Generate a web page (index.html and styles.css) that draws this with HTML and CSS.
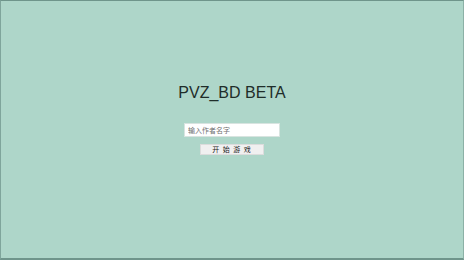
FILE: index.html
```html
<!DOCTYPE html>
<html lang="zh">
<head>
<meta charset="utf-8">
<title>PVZ_BD BETA</title>
<link rel="stylesheet" href="styles.css">
</head>
<body>
<div class="frame">
  <h1 class="title">PVZ_BD BETA</h1>
  <input class="name" type="text" placeholder="输入作者名字">
  <button class="start" type="button">开 始 游 戏</button>
</div>
</body>
</html>
```

FILE: styles.css
```css
html, body {
  margin: 0;
  padding: 0;
}
body {
  width: 464px;
  height: 260px;
  overflow: hidden;
  background: #aed6c9;
}
.frame {
  box-sizing: border-box;
  width: 464px;
  height: 260px;
  border-top: 1px solid #6f958b;
  border-left: 1px solid #7fa59b;
  border-right: 1px solid #8cb1a6;
  border-bottom: 2px solid #6f958b;
  background: #aed6c9;
  display: flex;
  flex-direction: column;
  align-items: center;
  padding-top: 83px;
  font-family: "Liberation Sans", "Noto Sans CJK SC", sans-serif;
}
.title {
  margin: 0;
  font-size: 16px;
  line-height: 18px;
  font-weight: normal;
  color: #1f2d29;
}
.name {
  box-sizing: border-box;
  margin-top: 21px;
  width: 96px;
  height: 14px;
  padding: 0 3px;
  border: 1px solid #d8e4e0;
  background: #ffffff;
  font-family: "Noto Sans CJK SC", sans-serif;
  font-size: 7px;
  color: #333;
  outline: none;
}
.name::placeholder {
  color: #6f6f6f;
}
.start {
  box-sizing: border-box;
  margin-top: 7px;
  width: 64px;
  height: 11px;
  padding: 0;
  border: 1px solid #dcdcdc;
  background: #f0f0f0;
  font-family: "Noto Sans CJK SC", sans-serif;
  font-size: 7px;
  line-height: 9px;
  letter-spacing: 1px;
  color: #222;
}
```
